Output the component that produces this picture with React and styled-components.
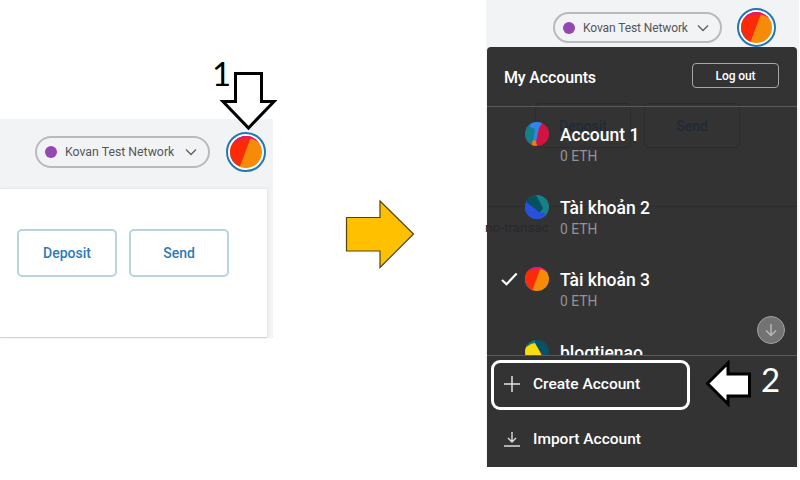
import React from "react";
import styled, { createGlobalStyle } from "styled-components";

const GlobalStyle = createGlobalStyle`
  * {
    box-sizing: border-box;
  }
  body {
    margin: 0;
    background: #fff;
    font-family: Roboto, sans-serif;
  }
  svg {
    display: block;
  }
`;

const accounts = [
  { id: 1, name: "Account 1", balance: "0 ETH", icon: "redBlue" },
  { id: 2, name: "Tài khoản 2", balance: "0 ETH", icon: "blue" },
  { id: 3, name: "Tài khoản 3", balance: "0 ETH", icon: "orange", selected: true },
  { id: 4, name: "blogtienao", balance: "0 ETH", icon: "yellow" },
];

const icons = {
  orange: (
    <>
      <rect width="24" height="24" fill="#f68b0a" />
      <path d="M0 0H16L7 24H0Z" fill="#fb2a08" />
      <path d="M5 0H22V5Q15 0 8 2.5L3 5Z" fill="#e0187d" />
      <path d="M0 14L6 24H0Z" fill="#4d6f94" />
    </>
  ),
  redBlue: (
    <>
      <rect width="24" height="24" fill="#d3133f" />
      <path d="M0 0H14L10 24H0Z" fill="#117f8c" />
      <path d="M5 0H18L14 6L11 20H8L10 7L5 5Z" fill="#2f84ef" />
      <path d="M8 18L11 19L12 24H6Z" fill="#ef7a13" />
    </>
  ),
  blue: (
    <>
      <rect width="24" height="24" fill="#15818b" />
      <path d="M0 0H11L18 13L14 19L0 9Z" fill="#07505f" />
      <path d="M0 6L14 17L20 18V24H0Z" fill="#2950dd" />
    </>
  ),
  yellow: (
    <>
      <rect width="24" height="24" fill="#075168" />
      <path d="M0 6L7 3H10L18 17H0Z" fill="#f8dc0b" />
      <path d="M0 0H10V3L6 4L0 8Z" fill="#13777f" />
      <path d="M15 11L19 17H17Z" fill="#d9224a" />
    </>
  ),
};

const Screen = styled.main`
  display: flex;
  position: relative;
  width: 800px;
  height: 480px;
  overflow: hidden;
`;

const WalletPane = styled.section`
  flex: none;
  width: 273px;
  height: 219px;
  margin-top: 119px;
  background: #f2f3f5;
`;

const TopBar = styled.header`
  display: flex;
  align-items: center;
  justify-content: flex-end;
  gap: ${(p) => p.$gap}px;
  height: ${(p) => p.$height}px;
  padding: ${(p) => p.$padding};
`;

const NetworkPill = styled.div`
  display: flex;
  align-items: center;
  width: ${(p) => p.$width}px;
  height: ${(p) => p.$height}px;
  padding: 0 11px 0 8px;
  border: 2px solid #bababc;
  border-radius: 16px;
  color: #55565a;
  font-size: ${(p) => p.$size}px;
  letter-spacing: ${(p) => p.$tracking || 0}px;
  line-height: 16px;
  white-space: nowrap;
`;

const NetworkDot = styled.i`
  flex: none;
  width: 12px;
  height: 12px;
  margin-right: 8px;
  border-radius: 50%;
  background: #9348b2;
`;

const NetworkName = styled.span`
  flex: 1;
`;

const AvatarRing = styled.div`
  display: grid;
  place-items: center;
  flex: none;
  width: ${(p) => p.$size}px;
  height: ${(p) => p.$size}px;
  border: 2px solid #2277b5;
  border-radius: 50%;
  background: #fff;
`;

const AvatarCircle = styled.div`
  flex: none;
  width: ${(p) => p.$size}px;
  height: ${(p) => p.$size}px;
  border-radius: 50%;
  overflow: hidden;
`;

const Card = styled.div`
  display: flex;
  gap: 12px;
  width: 267px;
  height: 150px;
  padding: 40px 0 0 17px;
  border-top: 1px solid #e9eaec;
  border-bottom: 1px solid #cfd1d2;
  box-shadow: 1px 0 2px #e4e5e7;
  background: #fff;
`;

const ActionButton = styled.button`
  width: 100px;
  height: 48px;
  padding: 0;
  border: 2px solid #b9d4db;
  border-radius: 5px;
  background: #fff;
  color: #2e7ab7;
  font: 500 14px Roboto, sans-serif;
`;

const MenuPane = styled.section`
  flex: none;
  position: relative;
  width: 313px;
  height: 467px;
  margin-left: 213px;
  background: #f2f3f5;
`;

const Menu = styled.div`
  position: absolute;
  top: 47px;
  left: 1px;
  width: 310px;
  height: 420px;
  border-radius: 4px 4px 0 0;
  background: #333334;
  color: #fff;
`;

// the account page stays faintly visible through the menu
const Backdrop = styled.div`
  position: absolute;
  inset: 0;
  padding-top: 56px;
  color: #26282d;
`;

const BackdropActions = styled.div`
  display: flex;
  gap: 13px;
  height: 104px;
  padding-left: 48px;
  border-bottom: 1px solid #2b2b2c;
`;

const BackdropButton = styled.div`
  width: 96px;
  height: 45px;
  border: 1px solid #2b2c2e;
  border-radius: 4px;
  color: #202a35;
  font-size: 14px;
  font-weight: 500;
  line-height: 44px;
  text-align: center;
`;

const BackdropNote = styled.div`
  margin: 11px 0 0 -2px;
  font-size: 13.5px;
  line-height: 18px;
`;

const MenuContent = styled.div`
  position: relative;
`;

const MenuHeader = styled.div`
  display: flex;
  align-items: center;
  justify-content: space-between;
  height: 60px;
  padding: 0 18px 0 17px;
  border-bottom: 1px solid #5b5b5c;
`;

const MenuTitle = styled.h1`
  margin: 2px 0 0;
  font-size: 16px;
  font-weight: 500;
  letter-spacing: -0.15px;
  line-height: 20px;
`;

const LogoutButton = styled.button`
  width: 87px;
  height: 25px;
  margin-bottom: 2px;
  padding: 0;
  border: 1px solid #a6a6a6;
  border-radius: 4px;
  background: none;
  color: #fff;
  font: 500 12px Roboto, sans-serif;
  letter-spacing: -0.1px;
`;

const AccountList = styled.div`
  height: 249px;
  overflow: hidden;
  border-bottom: 1px solid #5b5b5c;
`;

const AccountRow = styled.div`
  display: flex;
  height: 72.5px;
  padding: 15px 0 0 14px;
`;

const CheckSlot = styled.div`
  width: 24px;
  padding-top: 4px;
`;

const AccountText = styled.div`
  padding: 3px 0 0 11px;
`;

const AccountName = styled.div`
  font-size: 17.5px;
  font-weight: 500;
  line-height: 21px;
`;

const Balance = styled.div`
  color: #949495;
  font-size: 13.8px;
  line-height: 21px;
`;

const ScrollButton = styled.div`
  position: absolute;
  top: 269px;
  left: 270px;
  display: grid;
  place-items: center;
  width: 28px;
  height: 28px;
  border: 1.5px solid #a2a2a2;
  border-radius: 50%;
  background: #737373;
`;

const MenuAction = styled.div`
  display: flex;
  align-items: center;
  gap: 13px;
  height: 55px;
  padding: 0 0 0 17px;
  font-size: 15.5px;
  font-weight: 500;
  line-height: 20px;
`;

const Highlight = styled.div`
  position: absolute;
  top: 360px;
  left: 491px;
  width: 199px;
  height: 50px;
  border: 3px solid #fff;
  border-radius: 9px;
`;

const Pointer = styled.svg`
  position: absolute;
  top: ${(p) => p.$top}px;
  left: ${(p) => p.$left}px;
`;

const StepNumber = styled.span`
  position: absolute;
  top: ${(p) => p.$top}px;
  left: ${(p) => p.$left}px;
  color: ${(p) => p.$color};
  font: 400 33px Lato, sans-serif;
  line-height: 40px;
`;

const Identicon = ({ kind, size }) => (
  <AvatarCircle $size={size}>
    <svg width={size} height={size} viewBox="0 0 24 24">
      {icons[kind]}
    </svg>
  </AvatarCircle>
);

const Network = ({ width, height, size, tracking }) => (
  <NetworkPill $width={width} $height={height} $size={size} $tracking={tracking}>
    <NetworkDot />
    <NetworkName>Kovan Test Network</NetworkName>
    <svg width="12" height="8" viewBox="0 0 12 8" fill="none" stroke="#5d5e62" strokeWidth="1.3">
      <path d="M1 1.5L6 6.5L11 1.5" />
    </svg>
  </NetworkPill>
);

const AccountMenu = () => (
  <Menu>
    <Backdrop>
      <BackdropActions>
        <BackdropButton>Deposit</BackdropButton>
        <BackdropButton>Send</BackdropButton>
      </BackdropActions>
      <BackdropNote>no-transac</BackdropNote>
    </Backdrop>
    <MenuContent>
      <MenuHeader>
        <MenuTitle>My Accounts</MenuTitle>
        <LogoutButton>Log out</LogoutButton>
      </MenuHeader>
      <AccountList>
        {accounts.map((account) => (
          <AccountRow key={account.id}>
            <CheckSlot>
              {account.selected && (
                <svg width="17" height="16" viewBox="0 0 17 16" fill="none" stroke="#fff" strokeWidth="2.2">
                  <path d="M1 9L5.5 13.3L15.7 2.5" />
                </svg>
              )}
            </CheckSlot>
            <Identicon kind={account.icon} size={24} />
            <AccountText>
              <AccountName>{account.name}</AccountName>
              <Balance>{account.balance}</Balance>
            </AccountText>
          </AccountRow>
        ))}
      </AccountList>
      <MenuAction>
        <svg width="16" height="16" viewBox="0 0 16 16" stroke="#e4e4e4" strokeWidth="1.5">
          <path d="M8 0V16M0 8H16" />
        </svg>
        Create Account
      </MenuAction>
      <MenuAction>
        <svg width="16" height="16" viewBox="0 0 16 16" fill="none" stroke="#dcdcdc" strokeWidth="1.4">
          <path d="M8 1V11M4 7L8 11L12 7M0 15H16" />
        </svg>
        Import Account
      </MenuAction>
    </MenuContent>
    <ScrollButton>
      <svg width="12" height="14" viewBox="0 0 12 14" fill="none" stroke="#b8b8b8" strokeWidth="1.4">
        <path d="M6 1V12.5M1 7.5L6 12.5L11 7.5" />
      </svg>
    </ScrollButton>
  </Menu>
);

const App = () => {
  return (
    <Screen>
      <GlobalStyle />
      <WalletPane>
        <TopBar $height={69} $gap={16} $padding="0 7px 3px 0">
          <Network width={175} height={32} size={12.3} />
          <AvatarRing $size={40}>
            <Identicon kind="orange" size={32} />
          </AvatarRing>
        </TopBar>
        <Card>
          <ActionButton>Deposit</ActionButton>
          <ActionButton>Send</ActionButton>
        </Card>
      </WalletPane>

      <MenuPane>
        <TopBar $height={55} $gap={15} $padding="0 23px 0 0">
          <Network width={169} height={31} size={12} tracking={-0.1} />
          <AvatarRing $size={39}>
            <Identicon kind="orange" size={31} />
          </AvatarRing>
        </TopBar>
        <AccountMenu />
      </MenuPane>

      <StepNumber $top={53} $left={212} $color="#000">
        1
      </StepNumber>
      <Pointer $top={70} $left={218} width="62" height="62">
        <path d="M17.5 3.5H43.5V31.5H56L30.5 58L5 31.5H17.5Z" fill="#fff" stroke="#000" strokeWidth="3" />
      </Pointer>
      <Pointer $top={198} $left={344} width="72" height="72">
        <path d="M2.5 19.5H36V3L69.5 36L36 69.5V53H2.5Z" fill="#ffc000" stroke="#54430f" strokeWidth="1.2" />
      </Pointer>
      <Highlight />
      <Pointer $top={355} $left={702} width="52" height="56">
        <path d="M5.5 28.5L26 8V19H47.5V41H26V49Z" fill="#fff" stroke="#000" strokeWidth="3" />
      </Pointer>
      <StepNumber $top={359} $left={761} $color="#fff">
        2
      </StepNumber>
    </Screen>
  );
};

export default App;
